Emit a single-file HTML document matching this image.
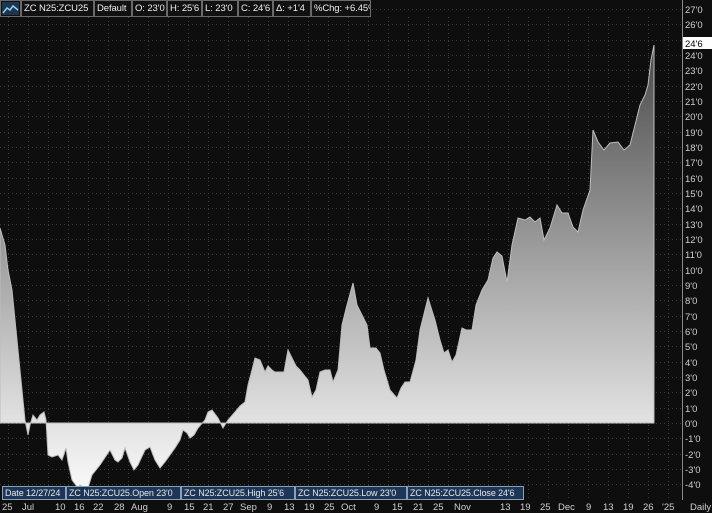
<!DOCTYPE html><html><head><style>
body{margin:0;background:#0e0e0e;width:712px;height:513px;overflow:hidden;font-family:"Liberation Sans",sans-serif;}
svg{position:absolute;left:0;top:0}
.hd{position:absolute;top:0;height:17px;border:1px solid #6a6a6a;box-sizing:border-box;color:#eee;font-size:9.5px;line-height:15px;padding:0 2px;background:#111;white-space:nowrap;overflow:hidden;letter-spacing:-0.1px}
.bx{position:absolute;top:486px;height:14px;border:1px solid #8aa0b8;box-sizing:border-box;background:#1d3658;color:#e6e6e6;font-size:9px;line-height:12px;padding:0 2px;white-space:nowrap;overflow:hidden;letter-spacing:-0.1px}
</style></head><body>
<svg width="712" height="513">
<defs>
<linearGradient id="g" gradientUnits="userSpaceOnUse" x1="0" y1="40" x2="0" y2="495">
<stop offset="0" stop-color="#484848"/><stop offset="0.84" stop-color="#e2e2e2"/><stop offset="1" stop-color="#fbfbfb"/></linearGradient>
</defs>
<g id="grid" stroke="#3e3e3e" stroke-dasharray="1 3" stroke-width="1">
</g>
<polygon fill="url(#g)" stroke="#bdbdbd" stroke-width="1" points="0,423 0,228 5,245 8,270 12,290 16,330 20,370 23,400 25,420 28,435 30,425 33,415 37,420 40,415 44,412 46,420 48,455 52,457 58,455 62,460 66,448 68,462 72,480 78,488 80,485 84,488 88,488 92,475 100,465 106,456 110,450 115,460 118,462 122,458 125,448 130,462 134,470 138,465 145,450 150,447 155,460 160,468 165,462 170,455 175,448 180,440 183,430 187,433 190,438 194,435 198,428 205,420 208,412 212,410 218,418 223,428 228,420 235,412 240,406 245,402 248,385 252,370 255,358 260,360 265,372 268,366 272,370 275,372 280,372 284,372 288,350 292,358 296,366 300,370 304,375 308,380 312,397 316,390 320,372 325,370 330,370 333,382 338,370 342,325 347,305 353,283 357,305 362,315 367,325 370,348 376,348 380,353 384,370 390,390 397,398 401,388 405,382 410,382 416,360 420,330 428,298 435,320 440,340 444,353 448,350 452,362 456,355 462,328 466,330 472,330 476,305 482,290 488,280 493,258 497,252 502,256 507,282 512,245 518,218 525,220 530,217 535,222 540,218 544,240 550,228 557,205 562,213 568,213 573,227 578,232 583,210 590,190 593,130 598,142 604,150 610,143 618,142 624,150 630,145 635,125 640,105 645,95 648,85 651,60 654,45 654,423"/>
<line x1="682.5" y1="0" x2="682.5" y2="500" stroke="#8a8a8a"/>
<rect x="683" y="37" width="29" height="12" fill="#fff"/>
<g id="yl" font-size="9.5" fill="#cfcfcf" font-family="Liberation Sans"></g>
<text x="685" y="47" font-size="9.5" fill="#000">24'6</text>
<g font-size="9.5" fill="#cfcfcf" font-family="Liberation Sans">
<text x="2" y="510">25</text><text x="22" y="510">Jul</text><text x="55" y="510">10</text><text x="74" y="510">16</text><text x="93" y="510">22</text><text x="114" y="510">28</text><text x="131" y="510">Aug</text><text x="167" y="510">9</text><text x="184" y="510">15</text><text x="203" y="510">21</text><text x="223" y="510">27</text><text x="240" y="510">Sep</text><text x="267" y="510">9</text><text x="284" y="510">13</text><text x="304" y="510">19</text><text x="324" y="510">25</text><text x="341" y="510">Oct</text><text x="374" y="510">9</text><text x="392" y="510">15</text><text x="413" y="510">21</text><text x="433" y="510">25</text><text x="454" y="510">Nov</text><text x="500" y="510">13</text><text x="520" y="510">19</text><text x="540" y="510">25</text><text x="558" y="510">Dec</text><text x="586" y="510">9</text><text x="603" y="510">13</text><text x="623" y="510">19</text><text x="643" y="510">26</text><text x="662" y="510">'25</text><text x="690" y="510">Daily</text>
</g>
</svg>
<div class="hd" style="left:0;width:21px;padding:0"><svg width="19" height="15" style="position:static"><rect x="1" y="1" width="17" height="13" fill="#1c3550"/><polyline points="2,12 6,7 9,9 12,5 17,9" fill="none" stroke="#8fd0f0" stroke-width="1.5"/></svg></div>
<div class="hd" style="left:21px;width:73px">ZC N25:ZCU25</div>
<div class="hd" style="left:94px;width:38px">Default</div>
<div class="hd" style="left:132px;width:35px">O: 23'0</div>
<div class="hd" style="left:167px;width:35px">H: 25'6</div>
<div class="hd" style="left:202px;width:36px">L: 23'0</div>
<div class="hd" style="left:238px;width:35px">C: 24'6</div>
<div class="hd" style="left:273px;width:38px">Δ: +1'4</div>
<div class="hd" style="left:311px;width:60px">%Chg: +6.45%</div>
<div class="bx" style="left:2px;width:64px">Date 12/27/24</div>
<div class="bx" style="left:66px;width:115px">ZC N25:ZCU25.Open 23'0</div>
<div class="bx" style="left:181px;width:114px">ZC N25:ZCU25.High 25'6</div>
<div class="bx" style="left:295px;width:112px">ZC N25:ZCU25.Low 23'0</div>
<div class="bx" style="left:407px;width:117px">ZC N25:ZCU25.Close 24'6</div>
<script>
var ns="http://www.w3.org/2000/svg",g=document.getElementById("grid"),yl=document.getElementById("yl");
for(var v=27;v>=-4;v--){var y=Math.round(423-v*15.33)+.5;
var l=document.createElementNS(ns,"line");l.setAttribute("x1",0);l.setAttribute("x2",682);l.setAttribute("y1",y);l.setAttribute("y2",y);g.appendChild(l);
if(v!=25){var t=document.createElementNS(ns,"text");t.setAttribute("x",685);t.setAttribute("y",y+3.5);t.textContent=v+"'0";yl.appendChild(t);}}
for(var x=8.5;x<682;x+=20){var l=document.createElementNS(ns,"line");l.setAttribute("x1",x);l.setAttribute("x2",x);l.setAttribute("y1",17);l.setAttribute("y2",500);g.appendChild(l);}
</script>
</body></html>
